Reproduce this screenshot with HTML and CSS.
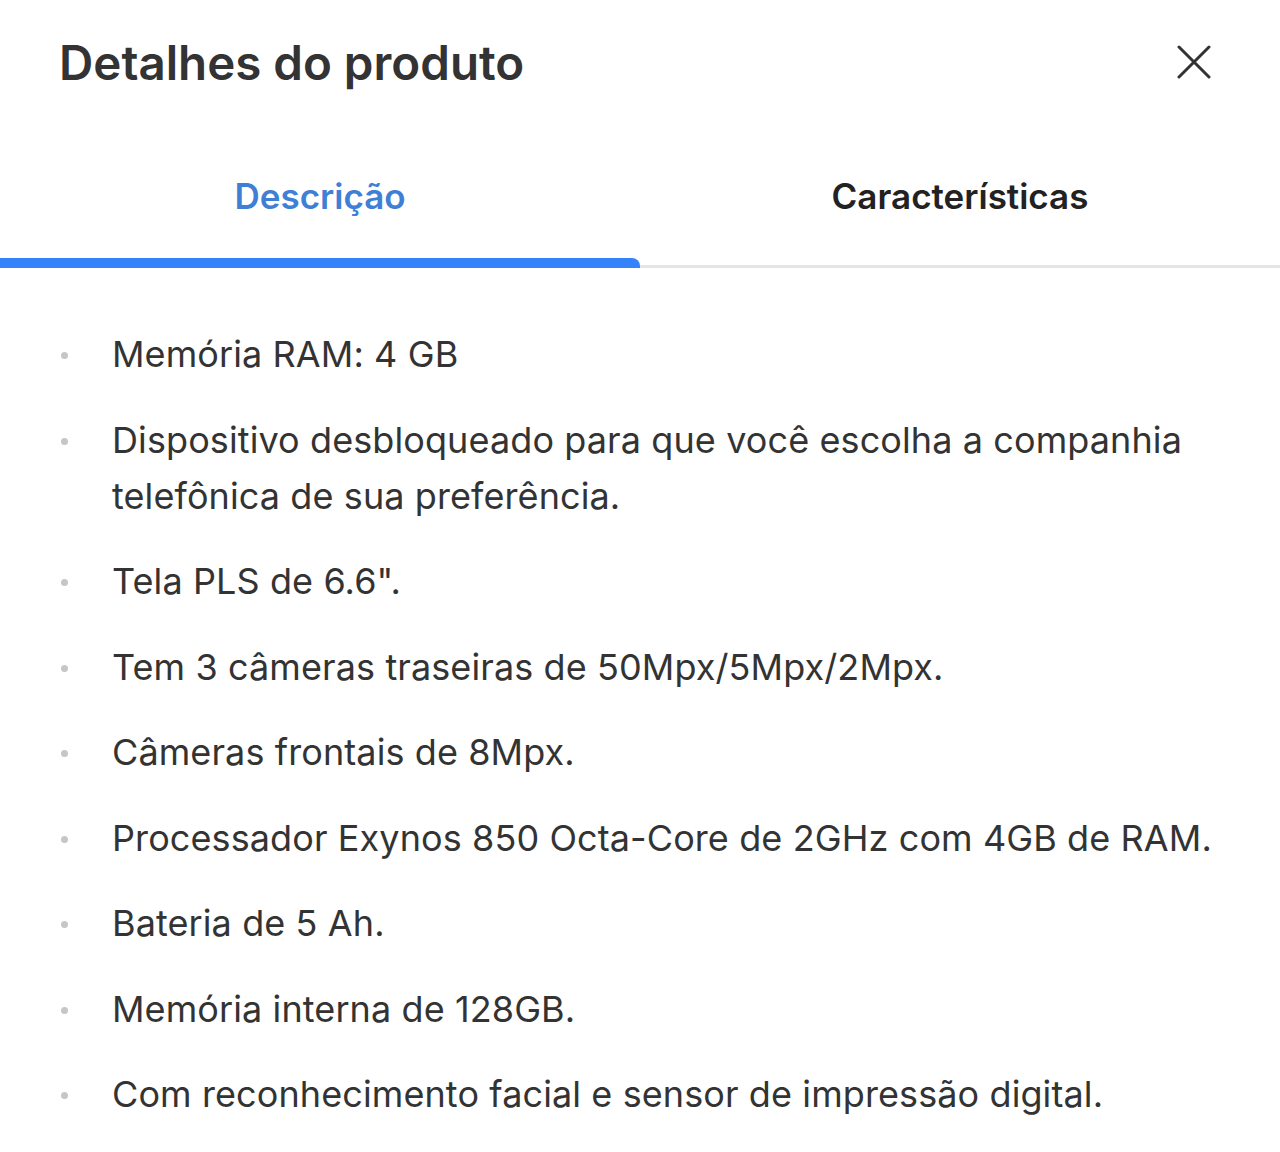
FILE: index.html
```html
<!DOCTYPE html>
<html lang="pt-BR">
<head>
<meta charset="utf-8">
<title>Detalhes do produto</title>
<link rel="stylesheet" href="styles.css">
</head>
<body>
<div class="modal">
  <header class="modal-header">
    <h1 class="modal-title">Detalhes do produto</h1>
    <button class="close-btn" aria-label="Fechar">
      <svg viewBox="0 0 34 34" width="34" height="34"><path d="M2 2 L32 32 M32 2 L2 32" stroke="#333" stroke-width="3" stroke-linecap="round" fill="none"/></svg>
    </button>
  </header>
  <nav class="tabs">
    <div class="tab tab-active">Descrição</div>
    <div class="tab">Características</div>
  </nav>
  <ul class="features">
    <li>Memória RAM: 4 GB</li>
    <li>Dispositivo desbloqueado para que você escolha a companhia telefônica de sua preferência.</li>
    <li>Tela PLS de 6.6".</li>
    <li>Tem 3 câmeras traseiras de 50Mpx/5Mpx/2Mpx.</li>
    <li>Câmeras frontais de 8Mpx.</li>
    <li>Processador Exynos 850 Octa-Core de 2GHz com 4GB de RAM.</li>
    <li>Bateria de 5 Ah.</li>
    <li>Memória interna de 128GB.</li>
    <li>Com reconhecimento facial e sensor de impressão digital.</li>
  </ul>
</div>
</body>
</html>
```
FILE: styles.css
```css
* { box-sizing: border-box; }
body {
  margin: 0;
  background: #fff;
  font-family: Inter, "Liberation Sans", sans-serif;
  color: #333;
}
.modal { width: 1280px; }
.modal-header {
  height: 122px;
  display: flex;
  align-items: center;
  justify-content: space-between;
  padding: 2px 69px 0 59px;
}
.modal-title {
  margin: 0;
  font-size: 47.5px;
  font-weight: 600;
  color: #333;
}
.close-btn {
  border: 0;
  background: none;
  padding: 0;
  width: 34px;
  height: 34px;
  display: flex;
}
.tabs {
  display: flex;
  height: 146px;
  border-bottom: 3px solid #e5e5e5;
}
.tab {
  flex: 1;
  display: flex;
  align-items: center;
  justify-content: center;
  font-size: 35px;
  font-weight: 600;
  color: #222;
  position: relative;
  padding-top: 4px;
}
.tab-active { color: #3f7fd6; }
.tab-active::after {
  content: "";
  position: absolute;
  left: 0;
  right: 0;
  bottom: -3px;
  height: 10px;
  background: #3483fa;
  border-top-right-radius: 8px;
}
.features {
  list-style: none;
  margin: 58px 0 0;
  padding: 0 40px 0 112px;
}
.features li {
  position: relative;
  font-size: 36px;
  letter-spacing: 0.1px;
  line-height: 56px;
  margin-bottom: 29.5px;
  color: #333;
}
.features li::before {
  content: "";
  position: absolute;
  left: -51px;
  top: 26px;
  width: 7px;
  height: 7px;
  border-radius: 50%;
  background: #c6c6c6;
}
```
